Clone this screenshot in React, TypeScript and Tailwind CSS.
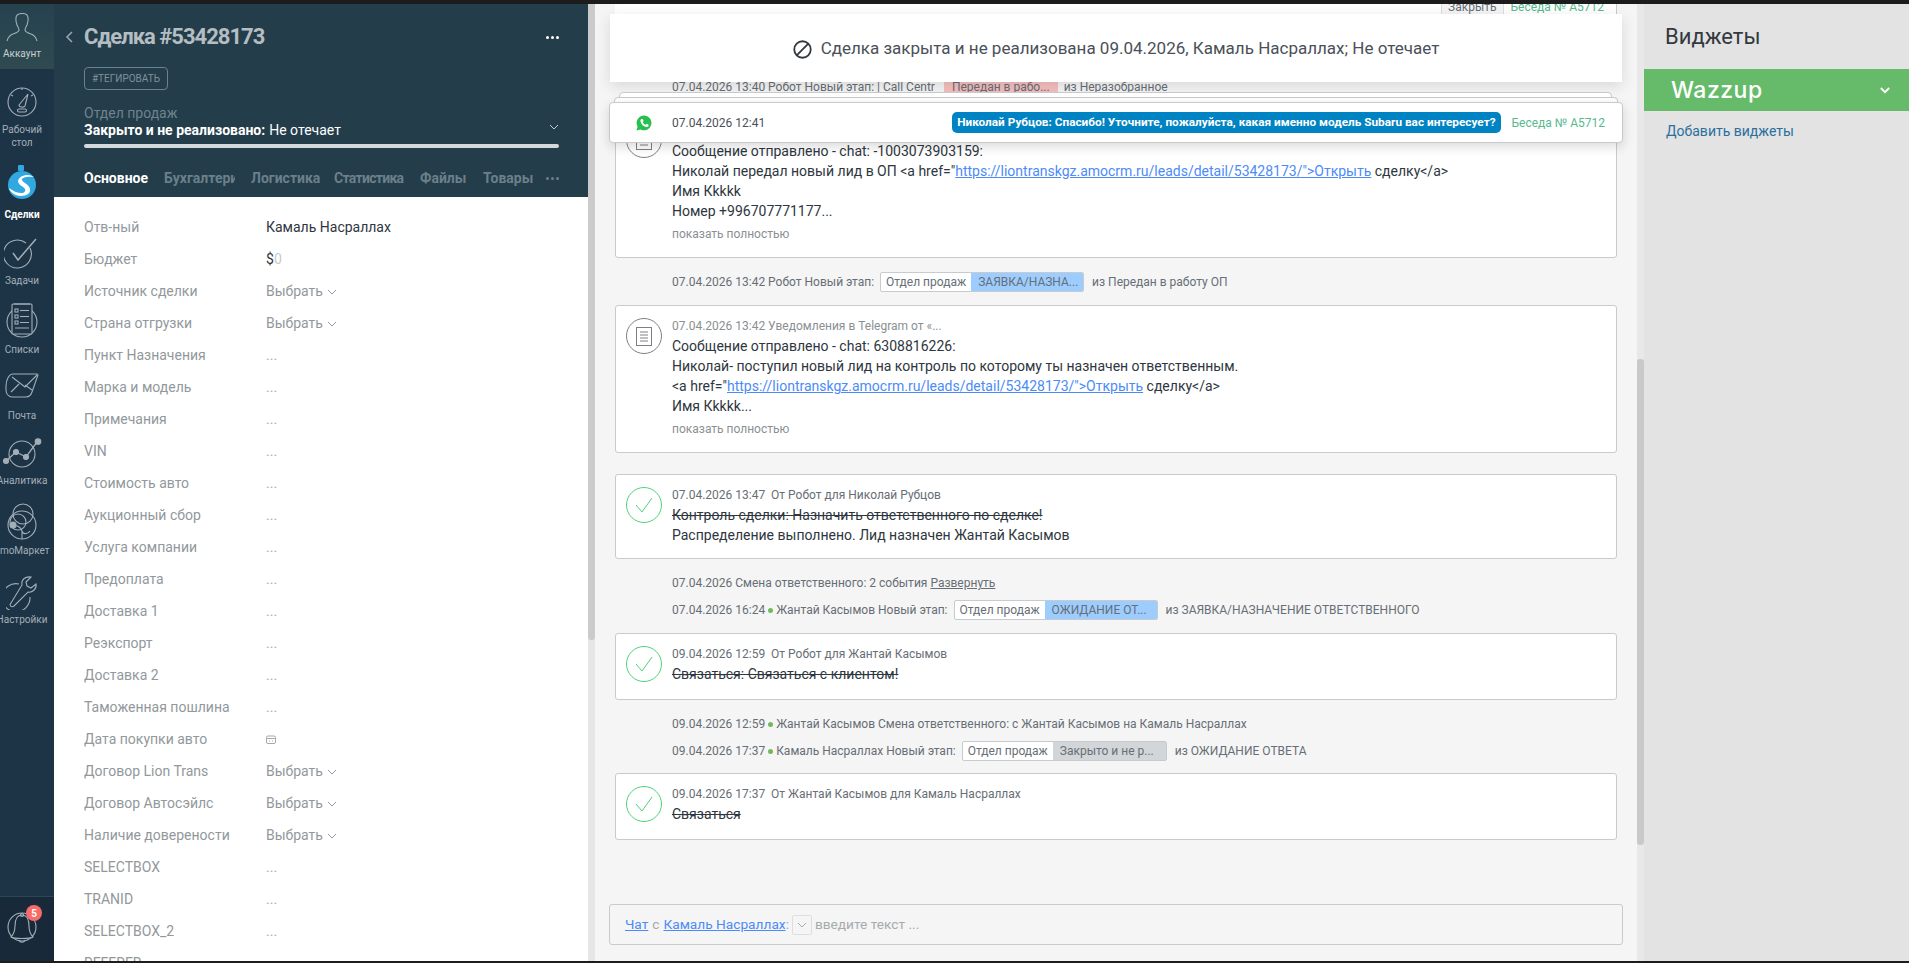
import type { ReactNode } from "react";

const sansFont = "font-['Roboto','Liberation_Sans',sans-serif]";

const navStroke = { fill: "none", stroke: "#a3afb8", strokeWidth: 1.1 };

function AccountIcon() {
  return (
    <svg width="32" height="30" viewBox="0 0 32 30" {...navStroke}>
      <path d="M11 2c3-2 8-2 10 0 2 3 1 7 0 10-1 2-2 3-2 5 0 2 3 3 6 4 3 1 5 3 6 7M11 2c-2 3-1 7 0 10 1 2 2 3 2 5 0 2-3 3-6 4-3 1-5 3-6 7" />
    </svg>
  );
}

function DashboardIcon() {
  return (
    <svg width="30" height="30" viewBox="0 0 30 30" {...navStroke}>
      <circle cx="15" cy="15" r="14" />
      <path d="M12 18l9-11-3 12c-1 2-6 1-6-1z" />
      <rect x="10.500" y="22" width="9" height="3" rx="1.500" />
      <path d="M15 1v2M4 8l2 1M26 8l-2 1" />
    </svg>
  );
}

function DealsIcon() {
  return (
    <svg width="30" height="36" viewBox="0 0 30 36">
      <rect x="11" y="0" width="6" height="6" rx="1" fill="#31a8df" />
      <circle cx="15" cy="20" r="14" fill="#31a8df" />
      <path
        d="M27 12C22 8 12 10 11 16c0 4 5 5 7 8 1 2-1 4-3 4-5 0-9-2-13-5 1 4 6 8 12 8 6 0 10-3 9-7-1-5-7-6-8-9-1-2 5-4 12-3z"
        fill="#fff"
      />
    </svg>
  );
}

function TasksIcon() {
  return (
    <svg width="36" height="31" viewBox="0 0 36 31" {...navStroke}>
      <path d="M26 10a14 14 0 1 1-4-5" />
      <path d="M9 15l5 7L32 1" strokeWidth="1.500" />
    </svg>
  );
}

function ListsIcon() {
  return (
    <svg width="32" height="35" viewBox="0 0 32 35" {...navStroke}>
      <circle cx="16" cy="19" r="15" />
      <rect x="6" y="1" width="20" height="30" rx="1" fill="#1d3346" />
      <path d="M8 1h16" />
      <rect x="9" y="6" width="3" height="3" />
      <path d="M14 7.500h9" />
      <rect x="9" y="12" width="3" height="3" />
      <path d="M14 13.500h9" />
      <rect x="9" y="18" width="3" height="3" />
      <path d="M14 19.500h9M9 25h14" />
    </svg>
  );
}

function MailIcon() {
  return (
    <svg width="34" height="25" viewBox="0 0 34 25" {...navStroke}>
      <path d="M8 1h24c1 0 1 1 1 1l-6 17c-1 3-3 5-6 5H7c-3 0-6-3-6-7V13C1 7 4 1 8 1z" />
      <path d="M7 4l13 10L32 2M6 19l8-8M27 17l-7-5" />
    </svg>
  );
}

function AnalyticsIcon() {
  return (
    <svg width="40" height="30" viewBox="0 0 40 30" {...navStroke}>
      <circle cx="20" cy="16" r="13" />
      <path d="M4 23l10-9 10 5 11-15" strokeWidth="1.300" />
      <circle cx="4" cy="23" r="2.500" fill="#a3afb8" />
      <circle cx="14" cy="14" r="2.500" fill="#a3afb8" />
      <circle cx="24" cy="19" r="2.500" fill="#a3afb8" />
      <circle cx="36" cy="3.500" r="2.800" fill="#a3afb8" />
    </svg>
  );
}

function MarketIcon() {
  return (
    <svg width="30" height="37" viewBox="0 0 30 37" {...navStroke}>
      <circle cx="15" cy="22" r="14" />
      <circle cx="16" cy="11" r="10" />
      <circle cx="11" cy="19" r="8" />
      <path d="M4 22c6 0 10 2 11 6s6 3 8 0M15 28v8" />
      <circle cx="6" cy="22" r="3" fill="#a3afb8" />
    </svg>
  );
}

function SettingsIcon() {
  return (
    <svg width="32" height="37" viewBox="0 0 32 37" {...navStroke}>
      <path d="M13 11a14 14 0 1 0 11 13" />
      <path d="M5 30c-2 2 0 5 3 3l14-14c4 1 9-3 8-8l-5 4-4-2-1-4 5-5c-6-1-10 3-9 8z" fill="#1d3346" />
    </svg>
  );
}

function BellIcon() {
  return (
    <svg width="30" height="35" viewBox="0 0 30 35" {...navStroke}>
      <circle cx="15" cy="15" r="14" />
      <path d="M15 3c-5 0-7 5-7 11 0 5-1 8-4 11 3 2 19 2 22 0-3-3-4-6-4-11 0-6-2-11-7-11z" fill="#182a39" />
      <path d="M12 28c1 3 5 3 6 0" />
      <circle cx="15" cy="3" r="1.500" />
    </svg>
  );
}

function NavItem({
  icon,
  lines,
  className,
  active,
}: {
  icon: ReactNode;
  lines: string[];
  className: string;
  active?: boolean;
}) {
  return (
    <div className={`flex w-[44px] flex-col items-center ${className}`}>
      {icon}
      {lines.map((line) => (
        <span
          key={line}
          className={`block whitespace-nowrap text-[10px] leading-[13px] ${active ? "font-bold text-white" : "text-[#a3afb8]"}`}
        >
          {line}
        </span>
      ))}
    </div>
  );
}

function Sidebar() {
  return (
    <nav className="flex h-full w-[54px] shrink-0 flex-col overflow-hidden bg-[#1d3346]">
      <div className="flex h-[65px] w-full shrink-0 flex-col bg-gradient-to-b from-[#25424f] to-[#2f4a50]">
        <div className="flex w-[44px] flex-col items-center pt-[9px]">
          <AccountIcon />
          <span className="mt-[4px] text-[10px] leading-[13px] text-[#c7d0d5]">Аккаунт</span>
        </div>
      </div>
      <NavItem icon={<DashboardIcon />} lines={["Рабочий", "стол"]} className="h-[84px] shrink-0 gap-0 pt-[18px] [&>svg]:mb-[6px]" />
      <NavItem icon={<DealsIcon />} lines={["Сделки"]} active className="h-[72px] shrink-0 pt-[12px] [&>svg]:mb-[7px]" />
      <NavItem icon={<TasksIcon />} lines={["Задачи"]} className="h-[65px] shrink-0 pt-[13px] [&>svg]:mb-[5px]" />
      <NavItem icon={<ListsIcon />} lines={["Списки"]} className="h-[70px] shrink-0 pt-[13px] [&>svg]:mb-[5px]" />
      <NavItem icon={<MailIcon />} lines={["Почта"]} className="h-[65px] shrink-0 pt-[13px] [&>svg]:mb-[11px]" />
      <NavItem icon={<AnalyticsIcon />} lines={["Аналитика"]} className="h-[65px] shrink-0 pt-[13px] [&>svg]:mb-[6px]" />
      <NavItem icon={<MarketIcon />} lines={["amoМаркет"]} className="h-[70px] shrink-0 pt-[13px] [&>svg]:mb-[4px]" />
      <NavItem icon={<SettingsIcon />} lines={["Настройки"]} className="h-[70px] shrink-0 pt-[13px] [&>svg]:mb-[3px]" />
      <div className="mt-auto flex h-[65px] shrink-0 border-t border-[#2b4756] bg-[#182a39] pl-[7px] pt-[15px]">
        <div className="relative h-[35px] w-[30px]">
          <BellIcon />
          <span className="absolute right-[-5px] top-[-7px] flex h-4 w-4 items-center justify-center rounded-full bg-[#f86b6b] text-[10px] font-bold text-white">
            5
          </span>
        </div>
      </div>
    </nav>
  );
}

function Chevron({ className }: { className: string }) {
  return (
    <svg width="10" height="6" viewBox="0 0 10 6" fill="none" stroke="currentColor" strokeWidth="1" className={className}>
      <path d="M1 1l4 4 4-4" />
    </svg>
  );
}

function Dots({ className }: { className: string }) {
  return (
    <span className={`flex gap-[2px] ${className}`}>
      <i className="block h-[3px] w-[3px] rounded-full bg-current" />
      <i className="block h-[3px] w-[3px] rounded-full bg-current" />
      <i className="block h-[3px] w-[3px] rounded-full bg-current" />
    </span>
  );
}

const fields: { label: string; value: "dots" | "select" | "date" | "name" | "money" }[] = [
  { label: "Отв-ный", value: "name" },
  { label: "Бюджет", value: "money" },
  { label: "Источник сделки", value: "select" },
  { label: "Страна отгрузки", value: "select" },
  { label: "Пункт Назначения", value: "dots" },
  { label: "Марка и модель", value: "dots" },
  { label: "Примечания", value: "dots" },
  { label: "VIN", value: "dots" },
  { label: "Стоимость авто", value: "dots" },
  { label: "Аукционный сбор", value: "dots" },
  { label: "Услуга компании", value: "dots" },
  { label: "Предоплата", value: "dots" },
  { label: "Доставка 1", value: "dots" },
  { label: "Реэкспорт", value: "dots" },
  { label: "Доставка 2", value: "dots" },
  { label: "Таможенная пошлина", value: "dots" },
  { label: "Дата покупки авто", value: "date" },
  { label: "Договор Lion Trans", value: "select" },
  { label: "Договор Автосэйлс", value: "select" },
  { label: "Наличие доверености", value: "select" },
  { label: "SELECTBOX", value: "dots" },
  { label: "TRANID", value: "dots" },
  { label: "SELECTBOX_2", value: "dots" },
  { label: "REFERER", value: "dots" },
];

function FieldValue({ value }: { value: (typeof fields)[number]["value"] }) {
  if (value === "name") return <span className="text-[#2e3640]">Камаль Насраллах</span>;
  if (value === "money")
    return (
      <span className="text-[#2e3640]">
        $<span className="text-[#c5cacd]">0</span>
      </span>
    );
  if (value === "select")
    return (
      <span className="flex items-center gap-[4px] text-[#92989b]">
        Выбрать
        <Chevron className="mt-[1px] text-[#92989b]" />
      </span>
    );
  if (value === "date")
    return (
      <svg width="10" height="9" viewBox="0 0 10 9" fill="none" stroke="#a3a8ab" strokeWidth="1">
        <rect x="0.500" y="1" width="9" height="7.500" rx="1.500" />
        <path d="M0.500 3.500h9M3 6h1M6 6h1" />
      </svg>
    );
  return <span className="text-[#a6abae]">...</span>;
}

function LeadPanel() {
  return (
    <section className="flex h-full w-[534px] shrink-0 flex-col overflow-hidden bg-white">
      <header className="h-[193px] shrink-0 bg-[#233d4a] pl-[30px] pr-[29px]">
        <div className="relative flex h-[64px] items-center pt-[2px]">
          <svg width="8" height="12" viewBox="0 0 8 12" fill="none" stroke="#9aa8af" strokeWidth="1.500" className="absolute left-[-19px] top-[27px]">
            <path d="M7 1L2 6l5 5" />
          </svg>
          <h1 className="text-[22px] font-bold leading-[26px] tracking-[-1px] text-[#b4bdc2]">Сделка #53428173</h1>
          <Dots className="ml-auto text-white" />
        </div>
        <span className="mt-[-1px] block h-[23px] w-[84px] rounded-[4px] border border-[#6d818b] text-center text-[10px] leading-[21px] text-[#7f929b]">
          #ТЕГИРОВАТЬ
        </span>
        <div className="mt-[15px] text-[14px] leading-[16px] text-[#6f838d]">Отдел продаж</div>
        <div className="relative flex items-center text-[14px] leading-[18px] text-white">
          <b>Закрыто и не реализовано:</b>
          <span className="ml-1">Не отечает</span>
          <Chevron className="absolute right-[0px] top-[3px] text-[#c6cdd1]" />
        </div>
        <div className="mt-[5px] h-[4px] rounded-full bg-[#d6d9db]" />
        <div className="relative mt-[21px] flex h-[27px] items-start text-[14px] font-bold leading-[18px] text-[#6b808b]">
          <span className="w-[80px] text-white">Основное</span>
          <span className="w-[71px] overflow-hidden whitespace-nowrap">Бухгалтерия</span>
          <span className="ml-[16px] w-[83px]">Логистика</span>
          <span className="w-[86px] tracking-[-0.7px]">Статистика</span>
          <span className="w-[63px]">Файлы</span>
          <span>Товары</span>
          <Dots className="absolute right-[0px] top-[8px] text-[#6b808b]" />
        </div>
      </header>
      <div className="flex flex-1 flex-col overflow-hidden pl-[30px] pt-[14px] text-[14px]">
        {fields.map((field) => (
          <div key={field.label} className="flex h-[32px] shrink-0 items-center">
            <span className="w-[182px] shrink-0 text-[#92989b]">{field.label}</span>
            <FieldValue value={field.value} />
          </div>
        ))}
      </div>
    </section>
  );
}

function Pill({ left, right, tone, w }: { left: string; right: string; tone: string; w: string }) {
  return (
    <span className={`ml-[6px] mr-[8px] flex h-[20px] items-stretch overflow-hidden rounded-[2px] border border-[#c7cbcd] bg-white ${w}`}>
      <span className="flex items-center whitespace-nowrap px-[5px] text-[#676e75]">{left}</span>
      <span className={`flex flex-1 items-center whitespace-nowrap px-[7px] text-[#676e75] ${tone}`}>{right}</span>
    </span>
  );
}

function EventRow({ children, className }: { children: ReactNode; className: string }) {
  return (
    <div className={`flex h-[20px] items-center whitespace-nowrap pl-[57px] text-[12px] text-[#676e75] ${className}`}>{children}</div>
  );
}

function GreenDot() {
  return <i className="mx-[3px] block h-[5px] w-[5px] rounded-full bg-[#73b95c]" />;
}

function DoneIcon() {
  return (
    <svg width="36" height="36" viewBox="0 0 36 36" fill="none" className="shrink-0">
      <circle cx="18" cy="18" r="17.500" stroke="#4fd27a" />
      <path d="M10 18l6 7 10-14" stroke="#4fd27a" />
    </svg>
  );
}

function NoteIcon() {
  return (
    <svg width="36" height="36" viewBox="0 0 36 36" fill="none" stroke="#7c8084" className="shrink-0">
      <circle cx="18" cy="18" r="17.500" />
      <rect x="10.500" y="9.500" width="15" height="18" />
      <path d="M14 14h8M14 17h8M14 20h8M14 23h8" />
    </svg>
  );
}

function Card({ icon, className, children }: { icon: ReactNode; className: string; children: ReactNode }) {
  return (
    <div className={`flex gap-[10px] rounded-[3px] border border-[#c7cbcd] bg-white pl-[10px] ${className}`}>
      <span className="mt-[2px] shrink-0">{icon}</span>
      <div className="text-[14px] leading-[20px] text-[#2e3640]">{children}</div>
    </div>
  );
}

function CardHead({ children }: { children: ReactNode }) {
  return <div className="text-[12px] leading-[20px] text-[#676e75]">{children}</div>;
}

function LinkText({ children }: { children: ReactNode }) {
  return <span className="text-[#4c8bf7] underline">{children}</span>;
}

function Feed() {
  return (
    <main className="relative h-full w-[1042px] shrink-0 overflow-hidden bg-[#f5f5f5]">
      <div className="ml-[20px] mr-[20px] flex h-[10px] justify-end overflow-hidden border-r border-[#c7cbcd] bg-white pr-[12px] text-[12px] leading-[6px]">
        <span className="border-x border-[#ddd] bg-[#f5f5f5] px-[6px] text-[#676e75]">Закрыть</span>
        <span className="pl-[7px] text-[#58b98f]">Беседа № А5712</span>
      </div>
      <div className="relative ml-[20px] mr-[20px]">
        <EventRow className="mt-[63px]">
          07.04.2026 13:40 Робот Новый этап: | Call Centr
          <span className="ml-[9px] bg-[#f6bfbf] px-[8px]">Передан в рабо...</span>
          <span className="ml-[6px]">из Неразобранное</span>
        </EventRow>
        <Card icon={<NoteIcon />} className="mt-[8px] h-[153px] pt-[14px]">
          <div className="mt-[21px]">Сообщение отправлено - chat: -1003073903159:</div>
          <div>
            Николай передал новый лид в ОП &lt;a href="
            <LinkText>https://liontranskgz.amocrm.ru/leads/detail/53428173/"&gt;Открыть</LinkText> сделку&lt;/a&gt;
          </div>
          <div>Имя Кkkkk</div>
          <div>Номер +996707771177...</div>
          <div className="mt-[3px] text-[12px] text-[#8a8f93]">показать полностью</div>
        </Card>
        <EventRow className="mt-[14px]">
          07.04.2026 13:42 Робот Новый этап:
          <Pill left="Отдел продаж" right="ЗАЯВКА/НАЗНА..." tone="bg-[#9dcdff]" w="w-[204px]" />
          из Передан в работу ОП
        </EventRow>
        <Card icon={<NoteIcon />} className="mt-[13px] h-[148px] pt-[10px]">
          <CardHead>
            <span className="text-[#8a8f93]">07.04.2026 13:42 Уведомления в Telegram от «...</span>
          </CardHead>
          <div>Сообщение отправлено - chat: 6308816226:</div>
          <div>Николай- поступил новый лид на контроль по которому ты назначен ответственным.</div>
          <div>
            &lt;a href="<LinkText>https://liontranskgz.amocrm.ru/leads/detail/53428173/"&gt;Открыть</LinkText> сделку&lt;/a&gt;
          </div>
          <div>Имя Кkkkk...</div>
          <div className="mt-[3px] text-[12px] text-[#8a8f93]">показать полностью</div>
        </Card>
        <Card icon={<DoneIcon />} className="mt-[21px] h-[85px] pt-[10px]">
          <CardHead>07.04.2026 13:47 &nbsp;От Робот для Николай Рубцов</CardHead>
          <div className="line-through">Контроль сделки: Назначить ответственного по сделке!</div>
          <div>Распределение выполнено. Лид назначен Жантай Касымов</div>
        </Card>
        <EventRow className="mt-[14px]">
          07.04.2026 Смена ответственного: 2 события&nbsp;<span className="underline">Развернуть</span>
        </EventRow>
        <EventRow className="mt-[7px]">
          07.04.2026 16:24
          <GreenDot />
          Жантай Касымов Новый этап:
          <Pill left="Отдел продаж" right="ОЖИДАНИЕ ОТ..." tone="bg-[#9dcdff]" w="w-[204px]" />
          из ЗАЯВКА/НАЗНАЧЕНИЕ ОТВЕТСТВЕННОГО
        </EventRow>
        <Card icon={<DoneIcon />} className="mt-[13px] h-[67px] pt-[10px]">
          <CardHead>09.04.2026 12:59 &nbsp;От Робот для Жантай Касымов</CardHead>
          <div className="line-through">Связаться: Связаться с клиентом!</div>
        </Card>
        <EventRow className="mt-[14px]">
          09.04.2026 12:59
          <GreenDot />
          Жантай Касымов Смена ответственного: с Жантай Касымов на Камаль Насраллах
        </EventRow>
        <EventRow className="mt-[7px]">
          09.04.2026 17:37
          <GreenDot />
          Камаль Насраллах Новый этап:
          <Pill left="Отдел продаж" right="Закрыто и не р..." tone="bg-[#d3d6d9]" w="w-[205px]" />
          из ОЖИДАНИЕ ОТВЕТА
        </EventRow>
        <Card icon={<DoneIcon />} className="mt-[12px] h-[67px] pt-[10px]">
          <CardHead>09.04.2026 17:37 &nbsp;От Жантай Касымов для Камаль Насраллах</CardHead>
          <div className="line-through">Связаться</div>
        </Card>
      </div>

      {/* липкие плашки поверх ленты */}
      <div className="absolute left-[15px] top-[10px] flex h-[68px] w-[1012px] items-center justify-center gap-[9px] bg-white pt-[2px] text-[17px] text-[#4a5058] shadow-[0_4px_14px_rgba(0,0,0,0.12)]">
        <svg width="19" height="19" viewBox="0 0 18 18" fill="none" stroke="#33393f" strokeWidth="1.700">
          <circle cx="9" cy="9" r="7.800" />
          <path d="M3.500 14.500l11-11" />
        </svg>
        Сделка закрыта и не реализована 09.04.2026, Камаль Насраллах; Не отечает
      </div>
      <div className="absolute left-[24px] top-[88px] h-[20px] w-[993px] rounded-[4px] border border-[#c9c9c9] bg-white" />
      <div className="absolute left-[19px] top-[93px] h-[20px] w-[1004px] rounded-[4px] border border-[#c9c9c9] bg-white" />
      <div className="absolute left-[14px] top-[98px] flex h-[41px] w-[1014px] items-center rounded-[4px] border border-[#c9c9c9] bg-white text-[12px] text-[#4a5058] shadow-[0_4px_12px_rgba(0,0,0,0.14)]">
        <svg width="16" height="16" viewBox="0 0 16 16" className="ml-[26px]">
          <path
            d="M8 .5a7.400 7.400 0 0 0-6.400 11.100L.5 15.500l4-1.100A7.400 7.400 0 1 0 8 .5z"
            fill="#25c04f"
          />
          <path
            d="M5.500 4c-.6.300-1.300 1.200-1 2.500.5 2.500 3 5 5.500 5.500 1.300.2 2.200-.5 2.500-1.100l.1-1.100-2-1-.9 1c-1.300-.4-2.400-1.500-2.900-2.900l.8-.8-.9-2.100z"
            fill="#fff"
          />
        </svg>
        <span className="ml-[20px]">07.04.2026 12:41</span>
        <span className="ml-auto flex h-[21px] items-center whitespace-nowrap rounded-[5px] bg-[#0083c2] px-[5px] text-[11.8px] font-bold text-white">
          Николай Рубцов: Спасибо! Уточните, пожалуйста, какая именно модель Subaru вас интересует?
        </span>
        <span className="ml-[11px] mr-[17px] text-[#58b98f]">Беседа № А5712</span>
      </div>

      <div className="absolute bottom-[16px] left-[14px] flex h-[41px] w-[1014px] items-center rounded-[3px] border border-[#c7cbcd] bg-[#f5f5f5] pl-[15px] text-[13.700px] text-[#a6abae]">
        <LinkText>Чат</LinkText>
        <span className="mx-[4px]">с</span>
        <LinkText>Камаль Насраллах</LinkText>:
        <span className="mx-[3px] flex h-[20px] w-[20px] items-center justify-center rounded-[2px] border border-[#dedede]">
          <Chevron className="text-[#a6abae]" />
        </span>
        введите текст ...
      </div>
    </main>
  );
}

function Widgets() {
  return (
    <aside className="h-full flex-1 bg-[#e3e3e3]">
      <div className="flex h-[65px] items-start pl-[21px] pt-[20px] text-[22px] leading-[26px] text-[#33393f]">Виджеты</div>
      <div className="flex h-[42px] items-center justify-between bg-[#66bb6a] pl-[27px] pr-[19px] font-['Inter',sans-serif] text-[23px] font-medium tracking-[0.5px] text-white">
        Wazzup
        <svg width="10" height="7" viewBox="0 0 12 8" fill="none" stroke="#fff" strokeWidth="2.200">
          <path d="M1 1l5 5 5-5" />
        </svg>
      </div>
      <div className="pl-[22px] pt-[11px] text-[14px] leading-[18px] text-[#2a6f9e]">Добавить виджеты</div>
    </aside>
  );
}

function Scrollbar({ track, thumb }: { track: string; thumb: string }) {
  return (
    <div className={`flex h-full w-[7px] shrink-0 flex-col ${track}`}>
      <div className={thumb} />
    </div>
  );
}

export default function App() {
  return (
    <div className={`flex h-[963px] w-[1909px] flex-col overflow-hidden bg-[#1c1c1c] ${sansFont}`}>
      <div className="h-[4px] shrink-0" />
      <div className="flex h-[957px] shrink-0">
        <Sidebar />
        <LeadPanel />
        <Scrollbar track="bg-[#e6e6e6]" thumb="h-[636px] rounded-b-[3px] bg-[#cbcbcb]" />
        <Feed />
        <Scrollbar track="bg-[#e8e8e8]" thumb="mt-[355px] h-[486px] rounded-[3px] bg-[#c9c9c9]" />
        <Widgets />
      </div>
    </div>
  );
}
